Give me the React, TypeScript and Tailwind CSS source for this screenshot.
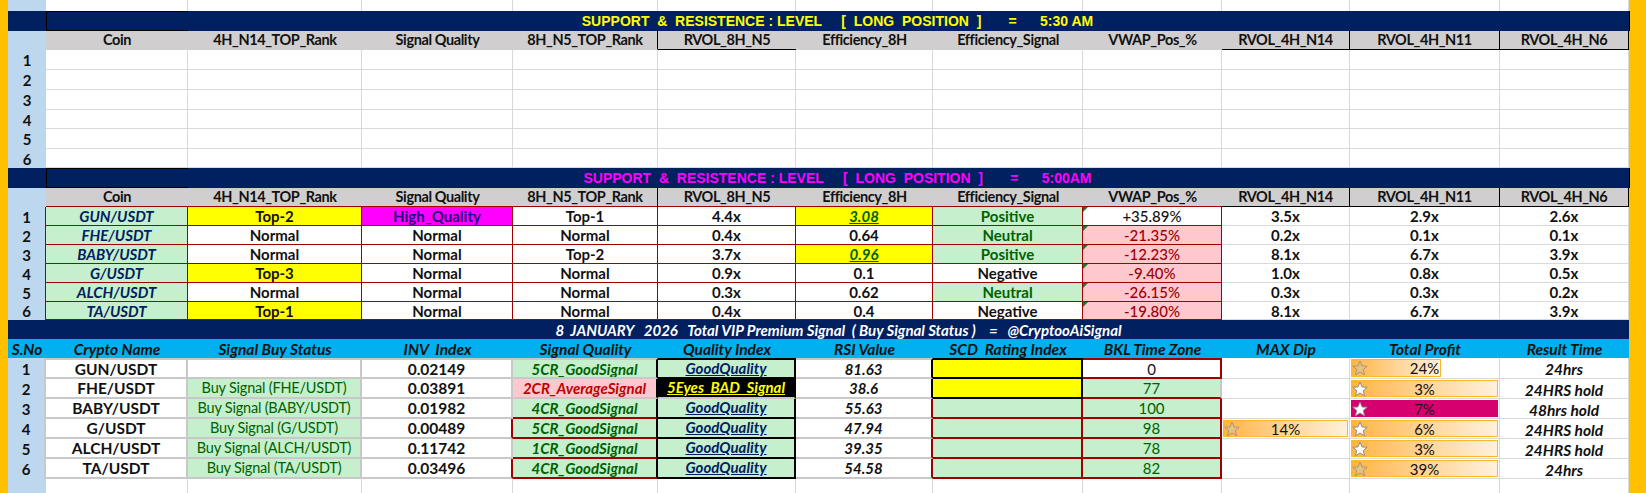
import React from 'react';

const GRID = 'grid grid-cols-[38px_142px_174px_151px_145px_138px_137px_150px_139px_128px_150px_129px]';
const CELL = 'relative flex items-center justify-center overflow-hidden whitespace-pre';
const GRAY = 'border-r border-b border-[#d9d9d9]';
const RED = 'border-r border-b border-[#a00000]';
const THICK = 'border-r-2 border-b-2';
const THIN_HEIGHTS = ['h-[20px]', 'h-[20px]', 'h-[20px]', 'h-[19px]', 'h-[20px]', 'h-[19px]'];
const MID_HEIGHTS = ['h-[19px]', 'h-[19px]', 'h-[19px]', 'h-[19px]', 'h-[19px]', 'h-[18px]'];
const BOT_HEIGHTS = ['h-[21px]', 'h-[20px]', 'h-[20px]', 'h-[20px]', 'h-[20px]', 'h-[20px]'];

const HEADERS = ['Coin', '4H_N14_TOP_Rank', 'Signal Quality', '8H_N5_TOP_Rank', 'RVOL_8H_N5', 'Efficiency_8H', 'Efficiency_Signal', 'VWAP_Pos_%', 'RVOL_4H_N14', 'RVOL_4H_N11', 'RVOL_4H_N6'];

const COINS = [
  ['GUN/USDT', 'Top-2', 'High_Quality', 'Top-1', '4.4x', '3.08', 'Positive', '+35.89%', '3.5x', '2.9x', '2.6x'],
  ['FHE/USDT', 'Normal', 'Normal', 'Normal', '0.4x', '0.64', 'Neutral', '-21.35%', '0.2x', '0.1x', '0.1x'],
  ['BABY/USDT', 'Normal', 'Normal', 'Top-2', '3.7x', '0.96', 'Positive', '-12.23%', '8.1x', '6.7x', '3.9x'],
  ['G/USDT', 'Top-3', 'Normal', 'Normal', '0.9x', '0.1', 'Negative', '-9.40%', '1.0x', '0.8x', '0.5x'],
  ['ALCH/USDT', 'Normal', 'Normal', 'Normal', '0.3x', '0.62', 'Neutral', '-26.15%', '0.3x', '0.3x', '0.2x'],
  ['TA/USDT', 'Top-1', 'Normal', 'Normal', '0.4x', '0.4', 'Negative', '-19.80%', '8.1x', '6.7x', '3.9x'],
];

const SIGNALS = [
  { name: 'GUN/USDT', status: '', inv: '0.02149', sq: '5CR_GoodSignal', rsi: '81.63', bkl: '0', dip: '', bar: 'w-[90px]', profit: '24%', star: 'tan', time: '24hrs' },
  { name: 'FHE/USDT', status: 'Buy Signal (FHE/USDT)', inv: '0.03891', sq: '2CR_AverageSignal', rsi: '38.6', bkl: '77', dip: '', bar: 'w-full', profit: '3%', star: 'white', time: '24HRS hold' },
  { name: 'BABY/USDT', status: 'Buy Signal (BABY/USDT)', inv: '0.01982', sq: '4CR_GoodSignal', rsi: '55.63', bkl: '100', dip: '', bar: 'w-full', profit: '7%', star: 'white', time: '48hrs hold', hot: true },
  { name: 'G/USDT', status: 'Buy Signal (G/USDT)', inv: '0.00489', sq: '5CR_GoodSignal', rsi: '47.94', bkl: '98', dip: '14%', bar: 'w-full', profit: '6%', star: 'white', time: '24HRS hold' },
  { name: 'ALCH/USDT', status: 'Buy Signal (ALCH/USDT)', inv: '0.11742', sq: '1CR_GoodSignal', rsi: '39.35', bkl: '78', dip: '', bar: 'w-full', profit: '3%', star: 'white', time: '24HRS hold' },
  { name: 'TA/USDT', status: 'Buy Signal (TA/USDT)', inv: '0.03496', sq: '4CR_GoodSignal', rsi: '54.58', bkl: '82', dip: '', bar: 'w-full', profit: '39%', star: 'tan', time: '24hrs' },
];

const Star = ({ tone }: { tone: string }) => (
  <svg width="16" height="16" viewBox="0 0 16 16" className="block">
    <polygon
      points="8,1 10,6 15.2,6.2 11.2,9.6 12.6,14.8 8,12 3.4,14.8 4.8,9.6 0.8,6.2 6,6"
      fill={tone === 'tan' ? '#e6c184' : '#ffffff'}
      stroke={tone === 'tan' ? '#a8977a' : '#8f8f8f'}
      strokeWidth="1"
    />
  </svg>
);

const DataBar = ({ text, star, width, hot }: { text: string; star: string; width: string; hot?: boolean }) => (
  <div className="grid h-full w-full grid-cols-1 grid-rows-1 p-px">
    <div className="col-start-1 row-start-1 flex items-stretch">
      <div className={`${width} ${hot ? 'bg-[#d6006f]' : 'border border-[#ffb628] bg-gradient-to-r from-[#ffb53a] to-[#fff1dc]'}`} />
    </div>
    <div className="col-start-1 row-start-1 flex items-center pl-px">
      <Star tone={star} />
    </div>
    <div className="col-start-1 row-start-1 flex items-center justify-center text-[15px] text-[#111]">{text}</div>
  </div>
);

const Corner = () => (
  <svg width="5" height="5" viewBox="0 0 5 5" className="absolute left-0 top-0">
    <polygon points="0,0 5,0 0,5" fill="#0f7b2e" />
  </svg>
);

const TitleBar = ({ text, colour, edges }: { text: string; colour: string; edges: string[] }) => (
  <div className={`${GRID} h-[20px] bg-[#002060]`}>
    <div className="col-start-1 row-start-1" />
    {edges.map((edge, i) => (
      <div key={i} className={`row-start-1 border-y ${edge} ${i === 0 ? 'col-start-2 border-l border-l-black' : ''} ${i === edges.length - 1 ? 'border-r border-r-black' : ''}`} />
    ))}
    <div className={`col-span-11 col-start-2 row-start-1 flex items-center justify-center whitespace-pre font-['Liberation_Sans',sans-serif] text-[14px] font-bold ${colour}`}>
      {text}
    </div>
  </div>
);

const HeaderRow = ({ height, bottoms }: { height: string; bottoms: string[] }) => (
  <div className={`${GRID} ${height}`}>
    <div className="bg-[#bdd7ee]" />
    {HEADERS.map((h, i) => {
      const right = i === 3 || i >= 8 ? 'border-r border-r-black' : '';
      return (
        <div key={h} className={`flex items-center justify-center border-b bg-[#d0cece] text-[14.5px] font-bold tracking-[-0.4px] text-[#111] ${bottoms[i]} ${right}`}>
          {h}
        </div>
      );
    })}
  </div>
);

const RowHead = ({ n, edge = '' }: { n: number; edge?: string }) => (
  <div className={`flex items-center justify-center bg-[#bdd7ee] text-[15px] font-bold text-[#111] ${edge}`}>{n}</div>
);

const EmptyRow = ({ height }: { height: string }) => (
  <div className={`${GRID} ${height}`}>
    <div className="bg-[#bdd7ee]" />
    {HEADERS.map((h) => (
      <div key={h} className="border-r border-[#d9d9d9]" />
    ))}
  </div>
);

const coinCell = (value: string, col: number) => {
  if (col === 0) return `${RED} bg-[#c6efce] font-bold italic text-[#002060]`;
  if (value === 'High_Quality') return `${RED} bg-[#ff00ff] font-bold text-[#20007a]`;
  if (col === 1 && value.startsWith('Top')) return `${RED} bg-[#ffff00] font-bold text-[#111]`;
  if (col === 5 && (value === '3.08' || value === '0.96')) return `${RED} bg-[#ffff00] pb-px font-bold italic text-[#006100] underline underline-offset-[1px]`;
  if (col === 6 && value !== 'Negative') return `${RED} bg-[#c6efce] font-bold text-[#006100]`;
  if (col === 7) {
    if (value.startsWith('+')) return `${RED} bg-white font-medium text-[#111]`;
    return `${RED} bg-[#ffc7ce] font-medium text-[#9c0006]`;
  }
  if (col < 8) return `${RED} bg-white font-bold text-[#111]`;
  return `${GRAY} bg-white font-bold text-[#111]`;
};

export default function App() {
  const redBottoms = HEADERS.map((_, i) => (i < 8 ? 'border-b-[#a00000]' : 'border-b-black'));
  const topBottoms = HEADERS.map((_, i) => (i === 4 || i >= 8 ? 'border-b-black' : 'border-b-[#d0cece]'));

  return (
    <div className="flex h-[493px] w-[1646px] overflow-hidden bg-[#ffc000] font-['Lato','Noto_Sans',sans-serif] leading-[16px]">
      <div className="ml-[8px] w-[1621px] bg-white">
        <EmptyRow height="h-[11px]" />
        <TitleBar
          text="SUPPORT  &  RESISTENCE : LEVEL     [  LONG  POSITION  ]       =      5:30 AM"
          colour="text-[#ffff00]"
          edges={['border-black', 'border-[#c00000]', 'border-[#c00000]', 'border-black', 'border-[#c00000]', 'border-[#c00000]', 'border-[#c00000]', 'border-black', 'border-[#c00000]', 'border-[#c00000]', 'border-black']}
        />
        <HeaderRow height="h-[19px]" bottoms={topBottoms} />
        {THIN_HEIGHTS.map((height, r) => (
          <div key={r} className={`${GRID} ${height}`}>
            <RowHead n={r + 1} />
            {HEADERS.map((h) => (
              <div key={h} className={`${CELL} ${GRAY}`} />
            ))}
          </div>
        ))}

        <TitleBar
          text="SUPPORT  &  RESISTENCE : LEVEL     [  LONG  POSITION  ]       =      5:00AM"
          colour="text-[#ff00ff]"
          edges={HEADERS.map(() => 'border-black')}
        />
        <HeaderRow height="h-[19px]" bottoms={redBottoms} />
        {COINS.map((row, r) => (
          <div key={r} className={`${GRID} ${MID_HEIGHTS[r]}`}>
            <RowHead n={r + 1} edge="border-r border-r-[#a00000]" />
            {row.map((value, c) => (
              <div key={c} className={`${CELL} text-[15px] ${coinCell(value, c)}`}>
                {c === 7 && <Corner />}
                {value}
              </div>
            ))}
          </div>
        ))}

        <div className="flex h-[19px] items-center justify-center whitespace-pre bg-[#002060] pl-[40px] text-[15px] font-bold italic text-white">
          {'8  JANUARY   2026   Total VIP Premium Signal  ( Buy Signal Status )    =   @CryptooAiSignal'}
        </div>
        <div className={`${GRID} h-[19px] bg-[#00b0f0] text-[15.5px] font-bold italic text-[#111]`}>
          {['S.No', 'Crypto Name', 'Signal Buy Status', 'INV  Index', 'Signal Quality', 'Quality Index', 'RSI Value', 'SCD  Rating Index', 'BKL Time Zone', 'MAX Dip', 'Total Profit', 'Result Time'].map((h) => (
            <div key={h} className="flex items-center justify-center whitespace-pre">{h}</div>
          ))}
        </div>
        {SIGNALS.map((s, r) => {
          const top = r === 0 ? 'border-t-2' : '';
          const redBox = r === 3 || r === 5;
          const bad = r === 1;
          const alert = r < 2;
          return (
            <div key={s.name} className={`${GRID} ${BOT_HEIGHTS[r]} text-[15px]`}>
              <div className="flex items-center justify-center border-r-2 border-r-[#c8c8c8] bg-[#bdd7ee] font-bold text-[#111]">{r + 1}</div>
              <div className={`${CELL} ${top} ${THICK} border-[#c8c8c8] bg-white text-[15.5px] font-bold text-[#111]`}>{s.name}</div>
              <div className={`${CELL} ${top} ${THICK} border-[#c8c8c8] text-[14.5px] tracking-[-0.2px] ${s.status ? 'bg-[#c6efce] text-[#006100]' : 'bg-white'}`}>{s.status}</div>
              <div className={`${CELL} ${top} ${THICK} border-[#c8c8c8] bg-white text-[15.5px] font-bold text-[#111] ${redBox ? 'border-r-[#a00000]' : ''}`}>{s.inv}</div>
              <div className={`${CELL} ${top} ${THICK} border-[#c8c8c8] border-r-black font-bold italic ${bad ? 'bg-[#ffc7ce] text-[#c00000]' : 'bg-[#c6efce] text-[#006100]'} ${r >= 2 ? 'border-b-[#a00000]' : ''}`}>{s.sq}</div>
              <div className={`${CELL} ${top} ${THICK} border-black pb-[2px] font-bold italic underline underline-offset-[1px] ${bad ? 'border-b-[#c8c8c8] bg-black text-[#ffff00]' : 'bg-[#c6efce] text-[#002060]'}`}>
                {bad ? '5Eyes  BAD  Signal' : 'GoodQuality'}
              </div>
              <div className={`${CELL} ${top} ${THICK} border-[#c8c8c8] bg-white font-bold italic text-[#111] ${alert ? 'border-r-black' : 'border-r-[#a00000]'}`}>{s.rsi}</div>
              <div className={`${CELL} ${top} ${THICK} ${alert ? 'border-black bg-[#ffff00]' : 'border-[#a00000] bg-[#c6efce]'}`} />
              <div className={`${CELL} ${top} ${THICK} ${r === 0 ? 'border-[#a00000] bg-white text-[#111]' : 'border-[#a00000] bg-[#c6efce] text-[#006100]'} ${r === 1 ? 'border-r-[#c8c8c8]' : ''}`}>{s.bkl}</div>
              <div className={`${CELL} ${GRAY} bg-white`}>
                {s.dip && <DataBar text={s.dip} star="tan" width="w-full" />}
              </div>
              <div className={`${CELL} ${GRAY} bg-white`}>
                <DataBar text={s.profit} star={s.star} width={s.bar} hot={s.hot} />
              </div>
              <div className={`${CELL} ${GRAY} bg-white pt-[2px] text-[15.5px] font-bold italic text-[#111]`}>{s.time}</div>
            </div>
          );
        })}
        <EmptyRow height="h-[14px]" />
      </div>
    </div>
  );
}
